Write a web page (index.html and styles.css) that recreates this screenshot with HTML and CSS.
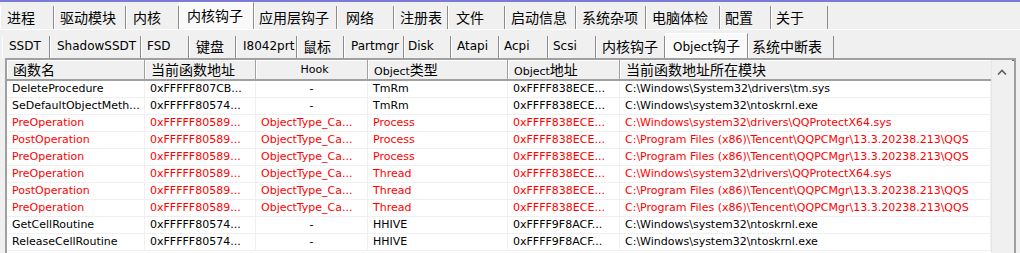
FILE: index.html
```html
<!DOCTYPE html>
<html lang="zh-CN">
<head>
    <meta charset="UTF-8">
    <title>Object钩子</title>
    <link rel="stylesheet" href="styles.css">
</head>
<body>
    <div class="topbar"></div>

    <nav class="tabs tabs-main">
        <div class="tab"><span class="cn">进程</span></div>
        <div class="tab"><span class="cn">驱动模块</span></div>
        <div class="tab"><span class="cn">内核</span></div>
        <div class="tab active"><span class="cn">内核钩子</span></div>
        <div class="tab"><span class="cn">应用层钩子</span></div>
        <div class="tab"><span class="cn">网络</span></div>
        <div class="tab"><span class="cn">注册表</span></div>
        <div class="tab"><span class="cn">文件</span></div>
        <div class="tab"><span class="cn">启动信息</span></div>
        <div class="tab"><span class="cn">系统杂项</span></div>
        <div class="tab"><span class="cn">电脑体检</span></div>
        <div class="tab"><span class="cn">配置</span></div>
        <div class="tab"><span class="cn">关于</span></div>
    </nav>

    <div class="panel">
        <nav class="tabs tabs-sub">
            <div class="tab">SSDT</div>
            <div class="tab">ShadowSSDT</div>
            <div class="tab">FSD</div>
            <div class="tab"><span class="cn">键盘</span></div>
            <div class="tab">I8042prt</div>
            <div class="tab"><span class="cn">鼠标</span></div>
            <div class="tab">Partmgr</div>
            <div class="tab">Disk</div>
            <div class="tab">Atapi</div>
            <div class="tab">Acpi</div>
            <div class="tab">Scsi</div>
            <div class="tab"><span class="cn">内核钩子</span></div>
            <div class="tab active">Object<span class="cn">钩子</span></div>
            <div class="tab"><span class="cn">系统中断表</span></div>
        </nav>

        <div class="list">
            <div class="grid">
                <div class="row head">
                    <div class="cell"><span class="cn">函数名</span></div>
                    <div class="cell"><span class="cn">当前函数地址</span></div>
                    <div class="cell center">Hook</div>
                    <div class="cell">Object<span class="cn">类型</span></div>
                    <div class="cell">Object<span class="cn">地址</span></div>
                    <div class="cell"><span class="cn">当前函数地址所在模块</span></div>
                </div>

                <div class="row">
                    <div class="cell">DeleteProcedure</div>
                    <div class="cell">0xFFFFF807CB...</div>
                    <div class="cell center">-</div>
                    <div class="cell">TmRm</div>
                    <div class="cell">0xFFFF838ECE...</div>
                    <div class="cell">C:\Windows\System32\drivers\tm.sys</div>
                </div>
                <div class="row">
                    <div class="cell">SeDefaultObjectMeth...</div>
                    <div class="cell">0xFFFFF80574...</div>
                    <div class="cell center">-</div>
                    <div class="cell">TmRm</div>
                    <div class="cell">0xFFFF838ECE...</div>
                    <div class="cell">C:\Windows\system32\ntoskrnl.exe</div>
                </div>
                <div class="row hooked">
                    <div class="cell">PreOperation</div>
                    <div class="cell">0xFFFFF80589...</div>
                    <div class="cell">ObjectType_Ca...</div>
                    <div class="cell">Process</div>
                    <div class="cell">0xFFFF838ECE...</div>
                    <div class="cell">C:\Windows\system32\drivers\QQProtectX64.sys</div>
                </div>
                <div class="row hooked">
                    <div class="cell">PostOperation</div>
                    <div class="cell">0xFFFFF80589...</div>
                    <div class="cell">ObjectType_Ca...</div>
                    <div class="cell">Process</div>
                    <div class="cell">0xFFFF838ECE...</div>
                    <div class="cell">C:\Program Files (x86)\Tencent\QQPCMgr\13.3.20238.213\QQS</div>
                </div>
                <div class="row hooked">
                    <div class="cell">PreOperation</div>
                    <div class="cell">0xFFFFF80589...</div>
                    <div class="cell">ObjectType_Ca...</div>
                    <div class="cell">Process</div>
                    <div class="cell">0xFFFF838ECE...</div>
                    <div class="cell">C:\Program Files (x86)\Tencent\QQPCMgr\13.3.20238.213\QQS</div>
                </div>
                <div class="row hooked">
                    <div class="cell">PreOperation</div>
                    <div class="cell">0xFFFFF80589...</div>
                    <div class="cell">ObjectType_Ca...</div>
                    <div class="cell">Thread</div>
                    <div class="cell">0xFFFF838ECE...</div>
                    <div class="cell">C:\Windows\system32\drivers\QQProtectX64.sys</div>
                </div>
                <div class="row hooked">
                    <div class="cell">PostOperation</div>
                    <div class="cell">0xFFFFF80589...</div>
                    <div class="cell">ObjectType_Ca...</div>
                    <div class="cell">Thread</div>
                    <div class="cell">0xFFFF838ECE...</div>
                    <div class="cell">C:\Program Files (x86)\Tencent\QQPCMgr\13.3.20238.213\QQS</div>
                </div>
                <div class="row hooked">
                    <div class="cell">PreOperation</div>
                    <div class="cell">0xFFFFF80589...</div>
                    <div class="cell">ObjectType_Ca...</div>
                    <div class="cell">Thread</div>
                    <div class="cell">0xFFFF838ECE...</div>
                    <div class="cell">C:\Program Files (x86)\Tencent\QQPCMgr\13.3.20238.213\QQS</div>
                </div>
                <div class="row">
                    <div class="cell">GetCellRoutine</div>
                    <div class="cell">0xFFFFF80574...</div>
                    <div class="cell center">-</div>
                    <div class="cell">HHIVE</div>
                    <div class="cell">0xFFFF9F8ACF...</div>
                    <div class="cell">C:\Windows\system32\ntoskrnl.exe</div>
                </div>
                <div class="row">
                    <div class="cell">ReleaseCellRoutine</div>
                    <div class="cell">0xFFFFF80574...</div>
                    <div class="cell center">-</div>
                    <div class="cell">HHIVE</div>
                    <div class="cell">0xFFFF9F8ACF...</div>
                    <div class="cell">C:\Windows\system32\ntoskrnl.exe</div>
                </div>
            </div>

            <div class="vscroll">
                <svg class="arrow" width="10" height="6" viewBox="0 0 10 6">
                    <path d="M1 5.5 L5 1.5 L9 5.5" fill="none" stroke="#606060" stroke-width="1.6"/>
                </svg>
            </div>
        </div>
    </div>
</body>
</html>
```

FILE: styles.css
```css
* {
    margin: 0;
    padding: 0;
    box-sizing: border-box;
}

body {
    width: 1020px;
    height: 253px;
    overflow: hidden;
    background: #f0f0f0;
    color: #000;
    font-family: 'DejaVu Sans', 'Noto Sans CJK SC', sans-serif;
    font-size: 12px;
}

.cn {
    font-family: 'Noto Sans CJK SC', sans-serif;
    font-size: 14px;
}

.topbar {
    height: 2px;
    background: #7b7bd6;
}

/* 选项卡 */
.tabs {
    display: flex;
    align-items: flex-end;
}

.tab {
    flex: none;
    padding-left: 6px;
    white-space: nowrap;
    border-right: 1px solid #8c8c8c;
    box-shadow: inset 1px 0 #ffffff;
}

.tab.active {
    background: #f9f9f9;
    border-top: 1px solid #ffffff;
    padding-left: 8px;
}

.tabs-main {
    height: 27px;
}

.tabs-main .tab {
    height: 23px;
    line-height: 22px;
}

.tabs-main .tab.active {
    height: 27px;
    line-height: 25px;
}

.tabs-main .tab:nth-child(1) { width: 54px; padding-left: 7px; }
.tabs-main .tab:nth-child(2) { width: 72px; }
.tabs-main .tab:nth-child(3) { width: 53px; padding-left: 7px; }
.tabs-main .tab:nth-child(4) { width: 75px; }
.tabs-main .tab:nth-child(5) { width: 83px; padding-left: 5px; }
.tabs-main .tab:nth-child(6) { width: 57px; padding-left: 9px; }
.tabs-main .tab:nth-child(7) { width: 54px; }
.tabs-main .tab:nth-child(8) { width: 57px; padding-left: 8px; }
.tabs-main .tab:nth-child(9) { width: 71px; }
.tabs-main .tab:nth-child(10) { width: 70px; }
.tabs-main .tab:nth-child(11) { width: 74px; }
.tabs-main .tab:nth-child(12) { width: 51px; padding-left: 5px; }
.tabs-main .tab:nth-child(13) { width: 57px; padding-left: 5px; }

.panel {
    border-top: 1px solid #ffffff;
    padding: 1px 2px 0 2px;
}

.tabs-sub {
    height: 27px;
    padding-top: 2px;
}

.tabs-sub .tab {
    height: 22px;
    line-height: 21px;
}

.tabs-sub .tab.active {
    height: 25px;
    line-height: 23px;
}

.tabs-sub .tab:nth-child(1) { width: 48px; padding-left: 7px; }
.tabs-sub .tab:nth-child(2) { width: 91px; padding-left: 7px; }
.tabs-sub .tab:nth-child(3) { width: 48px; }
.tabs-sub .tab:nth-child(4) { width: 47px; padding-left: 7px; }
.tabs-sub .tab:nth-child(5) { width: 61px; padding-left: 7px; }
.tabs-sub .tab:nth-child(6) { width: 47px; }
.tabs-sub .tab:nth-child(7) { width: 60px; padding-left: 7px; }
.tabs-sub .tab:nth-child(8) { width: 47px; padding-left: 4px; }
.tabs-sub .tab:nth-child(9) { width: 48px; }
.tabs-sub .tab:nth-child(10) { width: 49px; padding-left: 5px; }
.tabs-sub .tab:nth-child(11) { width: 48px; padding-left: 5px; }
.tabs-sub .tab:nth-child(12) { width: 69px; }
.tabs-sub .tab:nth-child(13) { width: 83px; }
.tabs-sub .tab:nth-child(14) { width: 86px; padding-left: 4px; }

/* 列表 */
.list {
    display: flex;
    margin-left: 3px;
    width: 1011px;
    height: 200px;
    border-top: 2px solid #a0a0a0;
    border-left: 2px solid #a0a0a0;
    border-right: 2px solid #a0a0a0;
    box-shadow: inset 1px 1px #696969;
}

.grid {
    width: 984px;
    background: #ffffff;
    font-size: 11px;
}

.row {
    display: grid;
    grid-template-columns: 138px 111px 112px 140px 112px 1fr;
    height: 17px;
    line-height: 16px;
}

.row .cell {
    padding-left: 5px;
    white-space: nowrap;
    overflow: hidden;
    border-right: 1px solid #f0f0f0;
    border-bottom: 1px solid #f0f0f0;
}

.row .cell.center {
    text-align: center;
    padding-left: 0;
}

.row.hooked {
    color: #ff0000;
}

.row.head {
    height: 21px;
    line-height: 19px;
    background: #f0f0f0;
    margin-bottom: 0;
}

.row.head .cell {
    padding-left: 6px;
    border-right: 1px solid #a0a0a0;
    border-bottom: 2px solid #a0a0a0;
    box-shadow: inset 1px 1px #ffffff;
}

.row.head .cell:last-child {
    border-right: none;
}

.vscroll {
    width: 21px;
    background: #f0f0f0;
    border-left: 1px solid #e6e6e6;
    display: flex;
    justify-content: center;
}

.arrow {
    margin-top: 9px;
}
```
